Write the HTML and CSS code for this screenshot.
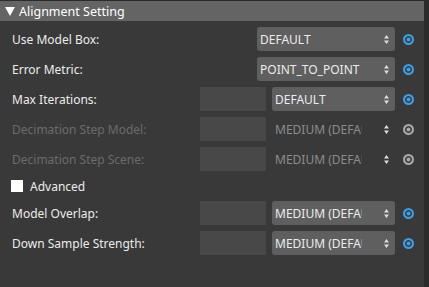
FILE: index.html
```html
<!DOCTYPE html>
<html lang="en">
<head>
    <meta charset="UTF-8">
    <title>Alignment Setting</title>
    <link rel="stylesheet" href="styles.css">
</head>
<body>
    <div class="panel">
        <div class="header">
            <span class="caret"></span>
            <span class="title">Alignment Setting</span>
        </div>

        <div class="rows">
            <div class="row">
                <span class="label">Use Model Box:</span>
                <div class="select wide">
                    <span class="value">DEFAULT</span>
                    <svg class="spin" width="5" height="9" viewBox="0 0 5 9"><path d="M2.5 0L5 3.5H0Z M2.5 9L5 5.5H0Z"/></svg>
                </div>
                <span class="radio"></span>
            </div>
            <div class="row">
                <span class="label">Error Metric:</span>
                <div class="select wide">
                    <span class="value">POINT_TO_POINT</span>
                    <svg class="spin" width="5" height="9" viewBox="0 0 5 9"><path d="M2.5 0L5 3.5H0Z M2.5 9L5 5.5H0Z"/></svg>
                </div>
                <span class="radio"></span>
            </div>
            <div class="row">
                <span class="label">Max Iterations:</span>
                <div class="box"></div>
                <div class="select">
                    <span class="value">DEFAULT</span>
                    <svg class="spin" width="5" height="9" viewBox="0 0 5 9"><path d="M2.5 0L5 3.5H0Z M2.5 9L5 5.5H0Z"/></svg>
                </div>
                <span class="radio"></span>
            </div>
            <div class="row disabled">
                <span class="label">Decimation Step Model:</span>
                <div class="box"></div>
                <div class="select">
                    <span class="value">MEDIUM (DEFAULT)</span>
                    <svg class="spin" width="5" height="9" viewBox="0 0 5 9"><path d="M2.5 0L5 3.5H0Z M2.5 9L5 5.5H0Z"/></svg>
                </div>
                <span class="radio"></span>
            </div>
            <div class="row disabled">
                <span class="label">Decimation Step Scene:</span>
                <div class="box"></div>
                <div class="select">
                    <span class="value">MEDIUM (DEFAULT)</span>
                    <svg class="spin" width="5" height="9" viewBox="0 0 5 9"><path d="M2.5 0L5 3.5H0Z M2.5 9L5 5.5H0Z"/></svg>
                </div>
                <span class="radio"></span>
            </div>
            <div class="check-row">
                <span class="checkbox"></span>
                <span class="label">Advanced</span>
            </div>
            <div class="row">
                <span class="label">Model Overlap:</span>
                <div class="box"></div>
                <div class="select">
                    <span class="value">MEDIUM (DEFAULT)</span>
                    <svg class="spin" width="5" height="9" viewBox="0 0 5 9"><path d="M2.5 0L5 3.5H0Z M2.5 9L5 5.5H0Z"/></svg>
                </div>
                <span class="radio"></span>
            </div>
            <div class="row">
                <span class="label">Down Sample Strength:</span>
                <div class="box"></div>
                <div class="select">
                    <span class="value">MEDIUM (DEFAULT)</span>
                    <svg class="spin" width="5" height="9" viewBox="0 0 5 9"><path d="M2.5 0L5 3.5H0Z M2.5 9L5 5.5H0Z"/></svg>
                </div>
                <span class="radio"></span>
            </div>
        </div>
    </div>
</body>
</html>
```

FILE: styles.css
```css
body {
    margin: 0;
    background: #2b2b2b;
    font-family: "Noto Sans", "Open Sans", sans-serif;
    font-size: 12px;
    color: #ececec;
}
.panel {
    width: 424px;
    height: 286px;
    margin-top: 1px;
    background: #393939;
}
.header {
    display: flex;
    align-items: center;
    height: 20px;
    background: #646464;
    padding-left: 5px;
}
.caret {
    width: 0;
    height: 0;
    border-left: 5px solid transparent;
    border-right: 5px solid transparent;
    border-top: 9px solid #ffffff;
    margin-right: 4px;
}
.title {
    font-size: 12.5px;
    color: #ffffff;
}
.rows {
    display: flex;
    flex-direction: column;
    gap: 6px;
    padding: 6px 0 0 12px;
}
.row {
    display: flex;
    align-items: center;
    height: 24px;
}
.label {
    flex: 1;
    white-space: nowrap;
}
.box {
    width: 66px;
    height: 24px;
    background: #484848;
    margin-right: 6px;
}
.select {
    display: flex;
    align-items: center;
    width: 123px;
    height: 24px;
    background: #5f5f5f;
    border-radius: 3px;
    padding-left: 3px;
    box-sizing: border-box;
}
.select.wide { width: 138px; }
.value {
    width: 87px;
    overflow: hidden;
    white-space: nowrap;
    flex: none;
}
.wide .value { width: 110px; }
.spin {
    margin-left: auto;
    margin-right: 6px;
    fill: #dcdcdc;
}
.radio {
    width: 7px;
    height: 7px;
    margin: 0 10px 0 8px;
    border-radius: 50%;
    border: 2px solid #3a9fe6;
    background: #3a9fe6;
    box-shadow: inset 0 0 0 1.5px #393939;
}
.disabled .label { color: #6b6b6b; }
.disabled .select { background: none; color: #8c8c8c; }
.disabled .radio {
    border-color: #a8a8a8;
    background: #a8a8a8;
}
.check-row {
    display: flex;
    align-items: center;
    height: 18px;
}
.checkbox {
    width: 12px;
    height: 12px;
    background: #ffffff;
    margin: 0 7px 0 -1px;
}
.check-row .label { flex: none; }
```
